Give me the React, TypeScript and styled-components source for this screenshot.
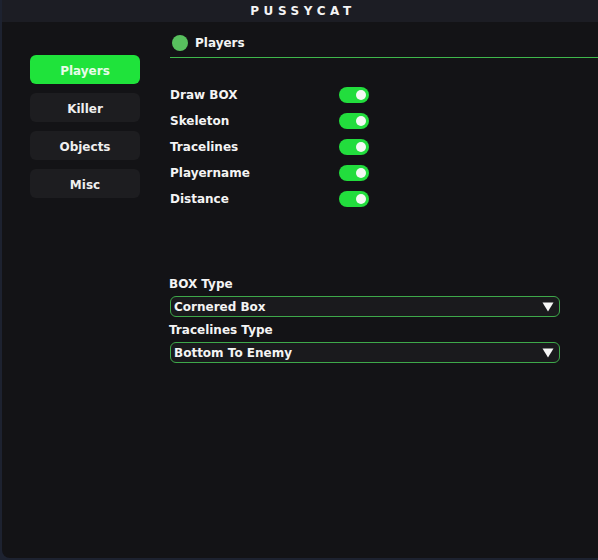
import styled, { createGlobalStyle } from 'styled-components';

const GlobalStyle = createGlobalStyle`
  html, body {
    margin: 0;
    padding: 0;
    background: #1d2230;
  }
  * {
    box-sizing: border-box;
  }
`;

const Window = styled.div`
  width: 596px;
  height: 558px;
  margin-left: 2px;
  display: flex;
  flex-direction: column;
  background: #131316;
  border-bottom-left-radius: 8px;
  overflow: hidden;
  font-family: 'DejaVu Sans', Verdana, sans-serif;
  font-weight: bold;
  color: #f4f4f4;
`;

const TitleBar = styled.div`
  height: 22px;
  flex: none;
  display: flex;
  align-items: center;
  justify-content: center;
  background: #1c1d24;
  font-size: 12px;
  letter-spacing: 4.6px;
  padding-left: 6px;
  color: #f4f4f4;
`;

const Body = styled.div`
  flex: 1;
  display: flex;
`;

const Sidebar = styled.nav`
  width: 138px;
  flex: none;
  display: flex;
  flex-direction: column;
  gap: 9px;
  padding: 33px 0 0 28px;
`;

const NavButton = styled.div<{ $active?: boolean }>`
  height: 29px;
  display: flex;
  align-items: center;
  justify-content: center;
  padding-top: 2px;
  border-radius: 6px;
  font-size: 12px;
  background: ${(p) => (p.$active ? '#1fe33b' : '#1d1d20')};
  color: ${(p) => (p.$active ? '#e9fbe9' : '#efefef')};
`;

const Content = styled.main`
  flex: 1;
  display: flex;
  flex-direction: column;
  padding-left: 30px;
`;

const Header = styled.div`
  display: flex;
  align-items: center;
  gap: 7px;
  height: 36px;
  padding: 6px 0 0 2px;
  border-bottom: 1px solid #3fb84c;
  font-size: 12px;
`;

const Dot = styled.span`
  width: 16px;
  height: 16px;
  border-radius: 50%;
  background: #58c05e;
`;

const OptionList = styled.div`
  margin-top: 24px;
  display: flex;
  flex-direction: column;
`;

const OptionRow = styled.div`
  height: 26px;
  display: flex;
  align-items: center;
  font-size: 12px;
`;

const OptionLabel = styled.span`
  width: 169px;
`;

const Toggle = styled.span`
  width: 30px;
  height: 16px;
  margin-top: -1px;
  border-radius: 8px;
  background: #22dd3d;
  display: flex;
  align-items: center;
  justify-content: flex-end;
  padding-right: 3px;
`;

const Knob = styled.span`
  width: 10px;
  height: 10px;
  border-radius: 50%;
  background: #f4f8f4;
`;

const Settings = styled.div`
  margin-top: 64px;
  display: flex;
  flex-direction: column;
`;

const FieldLabel = styled.div<{ $first?: boolean }>`
  height: 16px;
  line-height: 16px;
  font-size: 12px;
  margin: ${(p) => (p.$first ? '0' : '5px')} 0 4px -1px;
`;

const Select = styled.div`
  width: 390px;
  height: 21px;
  display: flex;
  align-items: center;
  justify-content: space-between;
  padding: 0 5px 0 3px;
  border: 1px solid #3ea84a;
  border-radius: 6px;
  background: #1a1a1d;
  font-size: 12px;
`;

const Caret = () => (
  <svg width="12" height="10" viewBox="0 0 12 10">
    <polygon points="0.5,0.5 11.5,0.5 6,9.5" fill="#f6f6f6" />
  </svg>
);

const options = ['Draw BOX', 'Skeleton', 'Tracelines', 'Playername', 'Distance'];
const tabs = ['Players', 'Killer', 'Objects', 'Misc'];

const App = (): JSX.Element => {
  return (
    <>
      <GlobalStyle />
      <Window>
        <TitleBar>PUSSYCAT</TitleBar>
        <Body>
          <Sidebar>
            {tabs.map((tab, index) => (
              <NavButton key={tab} $active={index === 0}>
                {tab}
              </NavButton>
            ))}
          </Sidebar>
          <Content>
            <Header>
              <Dot />
              Players
            </Header>
            <OptionList>
              {options.map((option) => (
                <OptionRow key={option}>
                  <OptionLabel>{option}</OptionLabel>
                  <Toggle>
                    <Knob />
                  </Toggle>
                </OptionRow>
              ))}
            </OptionList>
            <Settings>
              <FieldLabel $first>BOX Type</FieldLabel>
              <Select>
                Cornered Box
                <Caret />
              </Select>
              <FieldLabel>Tracelines Type</FieldLabel>
              <Select>
                Bottom To Enemy
                <Caret />
              </Select>
            </Settings>
          </Content>
        </Body>
      </Window>
    </>
  );
};

export default App;
